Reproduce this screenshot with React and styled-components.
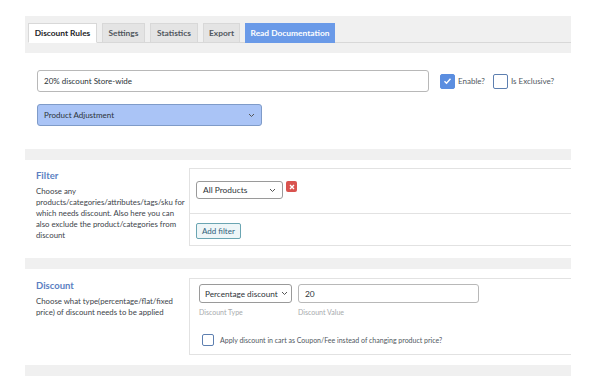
import React, { useState } from 'react';
import styled, { createGlobalStyle } from 'styled-components';

const GlobalStyle = createGlobalStyle`
  body {
    margin: 0;
    background: #fff;
    font-family: Lato, "Noto Sans", sans-serif;
    color: #3c434a;
  }
`;

const Page = styled.div`
  width: 546px;
  padding: 16px 0 0 25px;
`;

const TabBand = styled.div`
  background: #f0f0f0;
  padding: 7px 0 10px 3px;
`;

const TabRow = styled.div`
  display: flex;
  gap: 5px;
  border-bottom: 1px solid #d8d8d8;
`;

const Tab = styled.div`
  height: 20px;
  width: ${p => p.$w}px;
  display: flex;
  align-items: center;
  justify-content: center;
  white-space: nowrap;
  font-size: 8.4px;
  font-weight: 700;
  box-sizing: border-box;
  margin-bottom: -1px;
  border: 1px solid ${p => (p.$blue ? '#6a9ae8' : '#d8d8d8')};
  border-bottom-color: ${p => (p.$active ? '#fff' : p.$blue ? '#6a9ae8' : '#d8d8d8')};
  background: ${p => (p.$active ? '#fff' : p.$blue ? '#6a9ae8' : '#e4e4e4')};
  color: ${p => (p.$active ? '#1d2327' : p.$blue ? '#fff' : '#50575e')};
`;

const General = styled.div`
  padding: 17px 12px 23px;
  display: flex;
  flex-direction: column;
  gap: 12px;
`;

const TitleRow = styled.div`
  display: flex;
  align-items: center;
`;

const TextInput = styled.div`
  width: ${p => p.$w}px;
  height: ${p => p.$h || 22}px;
  box-sizing: border-box;
  border: 1px solid #b8b8b8;
  border-radius: 3px;
  background: #fff;
  display: flex;
  align-items: center;
  padding-left: 6px;
  white-space: nowrap;
  font-size: ${p => p.$fs || 8}px;
  color: #2c3338;
`;

const CheckLabel = styled.label`
  display: flex;
  align-items: center;
  gap: 3px;
  margin-left: ${p => p.$ml}px;
  font-size: 8px;
  color: #50575e;
  white-space: nowrap;
`;

const Box = styled.span`
  width: ${p => p.$s || 15}px;
  height: ${p => p.$s || 15}px;
  flex: none;
  box-sizing: border-box;
  border-radius: 2px;
  border: 1.5px solid ${p => (p.$on ? '#5b8ee0' : '#5d7fb0')};
  background: ${p => (p.$on ? '#5b8ee0' : '#fff')};
  display: flex;
  align-items: center;
  justify-content: center;
`;

const Select = styled.div`
  width: ${p => p.$w}px;
  height: ${p => p.$h}px;
  box-sizing: border-box;
  border: 1px solid ${p => (p.$blue ? '#7f9bc8' : '#9a9a9a')};
  border-radius: 3px;
  background: ${p => (p.$blue ? '#aac4f6' : '#fff')};
  display: flex;
  align-items: center;
  justify-content: space-between;
  gap: 3px;
  padding: 0 ${p => p.$px || 6}px;
  white-space: nowrap;
  font-size: ${p => p.$fs || 8}px;
  color: #2c3338;
`;

const Separator = styled.div`
  height: 11px;
  background: #f0f0f0;
`;

const Section = styled.div`
  display: grid;
  grid-template-columns: 164px 1fr;
  padding: ${p => p.$pad};
`;

const Info = styled.div`
  padding: 2px 0 0 11px;
`;

const InfoTitle = styled.div`
  color: #5b7fc2;
  font-size: 9.5px;
  font-weight: 700;
  margin-bottom: 5px;
`;

const InfoText = styled.div`
  font-size: 7.8px;
  line-height: 11px;
  color: #3c434a;
  padding-right: ${p => p.$pr || 0}px;
`;

const Panel = styled.div`
  border: 1px solid #e2e2e2;
  border-right: none;
  background: #fff;
`;

const PanelRow = styled.div`
  display: flex;
  align-items: flex-start;
  gap: 3px;
  padding: ${p => p.$pad};
  border-bottom: ${p => (p.$line ? '1px solid #e2e2e2' : 'none')};
`;

const RemoveBtn = styled.span`
  width: 11px;
  height: 11px;
  border-radius: 2px;
  background: #d9534f;
  display: flex;
  align-items: center;
  justify-content: center;
`;

const AddButton = styled.div`
  height: 16px;
  box-sizing: border-box;
  padding: 0 5px;
  border: 1px solid #6aa5b2;
  border-radius: 2px;
  background: #eef6f8;
  color: #2f5f7a;
  font-size: 8px;
  display: flex;
  align-items: center;
`;

const Field = styled.div`
  display: flex;
  flex-direction: column;
  gap: 5px;
`;

const Hint = styled.div`
  font-size: 7px;
  color: #a7aaad;
`;

const Fields = styled.div`
  display: flex;
  gap: 6px;
  padding: 5px 0 0 9px;
`;

const CartRow = styled.label`
  display: flex;
  align-items: center;
  gap: 6px;
  padding: 18px 0 8px 12px;
  font-size: 7px;
  color: #50575e;
`;

const Chevron = () => (
  <svg width="7" height="5" viewBox="0 0 7 5" style={{ flex: 'none' }}>
    <path d="M1 1l2.5 2.5L6 1" fill="none" stroke="#555" strokeWidth="1" />
  </svg>
);

const Tick = () => (
  <svg width="9" height="8" viewBox="0 0 9 8">
    <path d="M1.5 4.2l2 2L7.5 1.8" fill="none" stroke="#fff" strokeWidth="1.4" />
  </svg>
);

export default function App() {
  const [tab] = useState('rules');
  const tabs = [
    { id: 'rules', label: 'Discount Rules', w: 69 },
    { id: 'settings', label: 'Settings', w: 43 },
    { id: 'stats', label: 'Statistics', w: 48 },
    { id: 'export', label: 'Export', w: 37 },
  ];

  return (
    <>
      <GlobalStyle />
      <Page>
        <TabBand>
          <TabRow>
            {tabs.map(t => (
              <Tab key={t.id} $w={t.w} $active={tab === t.id}>{t.label}</Tab>
            ))}
            <Tab $blue $w={90}>Read Documentation</Tab>
          </TabRow>
        </TabBand>

        <General>
          <TitleRow>
            <TextInput $w={392}>20% discount Store-wide</TextInput>
            <CheckLabel $ml={11}>
              <Box $on><Tick /></Box>Enable?
            </CheckLabel>
            <CheckLabel $ml={8}>
              <Box />Is Exclusive?
            </CheckLabel>
          </TitleRow>
          <Select $blue $w={225} $h={22}>
            Product Adjustment <Chevron />
          </Select>
        </General>

        <Separator />

        <Section $pad="8px 0 12px">
          <Info>
            <InfoTitle>Filter</InfoTitle>
            <InfoText>
              Choose any products/categories/attributes/tags/sku for which needs discount. Also here
              you can also exclude the product/categories from discount
            </InfoText>
          </Info>
          <Panel>
            <PanelRow $line $pad="12px 6px 14px">
              <Select $w={87} $h={18} $fs={8.4}>
                All Products <Chevron />
              </Select>
              <RemoveBtn>
                <svg width="6" height="6" viewBox="0 0 6 6">
                  <path d="M1 1l4 4M5 1L1 5" stroke="#fff" strokeWidth="1.4" />
                </svg>
              </RemoveBtn>
            </PanelRow>
            <PanelRow $pad="9px 6px 6px">
              <AddButton>Add filter</AddButton>
            </PanelRow>
          </Panel>
        </Section>

        <Separator />

        <Section $pad="9px 0 10px">
          <Info>
            <InfoTitle>Discount</InfoTitle>
            <InfoText $pr={8}>
              Choose what type(percentage/flat/fixed price) of discount needs to be applied
            </InfoText>
          </Info>
          <Panel>
            <Fields>
              <Field>
                <Select $w={93} $h={19} $fs={8.2} $px={5}>
                  Percentage discount <Chevron />
                </Select>
                <Hint>Discount Type</Hint>
              </Field>
              <Field>
                <TextInput $w={181} $h={19} $fs={8.4}>20</TextInput>
                <Hint>Discount Value</Hint>
              </Field>
            </Fields>
            <CartRow>
              <Box $s={12} />
              Apply discount in cart as Coupon/Fee instead of changing product price?
            </CartRow>
          </Panel>
        </Section>

        <Separator />
      </Page>
    </>
  );
}
